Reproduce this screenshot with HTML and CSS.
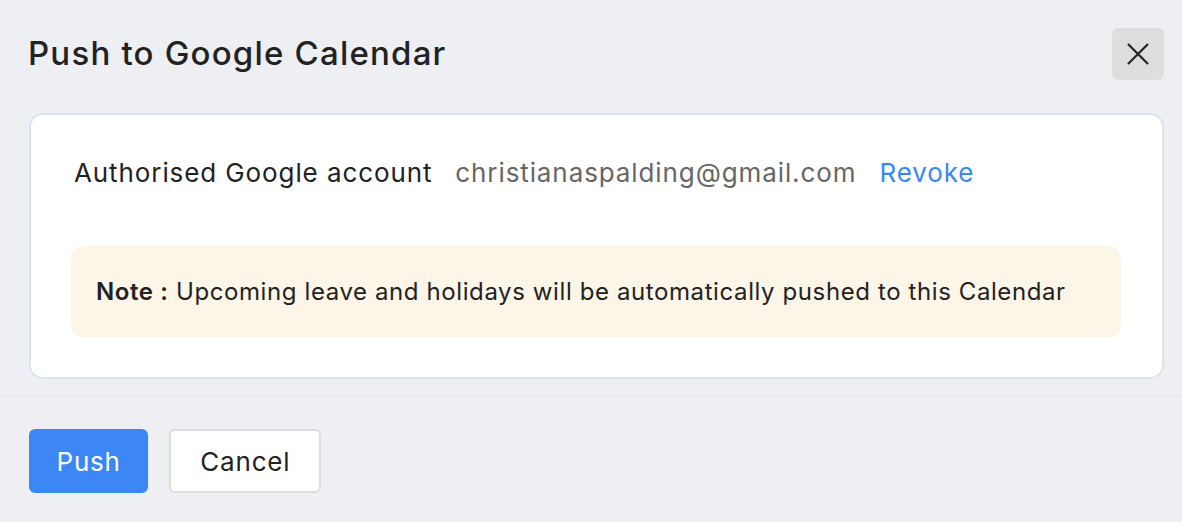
FILE: index.html
```html
<!doctype html>
<html>
  <head>
    <meta charset="UTF-8" />
    <link rel="stylesheet" href="styles.css">
  </head>
  <body>
    <div class="header">
      <h1 class="title">Push to Google Calendar</h1>
      <button class="close" aria-label="Close">
        <svg width="24" height="24" viewBox="0 0 24 24">
          <path d="M2 2 L22 22 M22 2 L2 22" stroke="#222" stroke-width="2.2" fill="none" />
        </svg>
      </button>
    </div>
    <div class="card">
      <div class="account-row">
        <span class="label">Authorised Google account</span>
        <span class="email">christianaspalding@gmail.com</span>
        <a class="revoke" href="#">Revoke</a>
      </div>
      <div class="note">
        <b>Note :</b> Upcoming leave and holidays will be automatically pushed to this Calendar
      </div>
    </div>
    <div class="footer">
      <button class="btn primary">Push</button>
      <button class="btn cancel">Cancel</button>
    </div>
  </body>
</html>
```

FILE: styles.css
```css
html,
body {
  margin: 0;
  height: 100%;
  background: #eeeff3;
  font-family: Inter, "Noto Sans", sans-serif;
  color: #222;
}
.header {
  display: flex;
  justify-content: space-between;
  align-items: flex-start;
  padding: 28px 18px 0 28px;
}
.title {
  margin: 0;
  padding-top: 3px;
  font-size: 33px;
  font-weight: 500;
  line-height: 44px;
  letter-spacing: 1.2px;
}
.close {
  width: 52px;
  height: 52px;
  border: none;
  border-radius: 6px;
  background: #dedede;
  display: flex;
  align-items: center;
  justify-content: center;
  padding: 0;
  cursor: pointer;
}
.card {
  margin: 33px 18px 0 29px;
  background: #fff;
  border: 2px solid #dce3ee;
  border-radius: 14px;
  padding: 40px 41px 40px 40px;
}
.account-row {
  display: flex;
  align-items: center;
  gap: 23px;
  padding-left: 3px;
  font-size: 26px;
  line-height: 36px;
  letter-spacing: 0.9px;
}
.email {
  color: #666;
}
.revoke {
  color: #3b87f0;
  text-decoration: none;
}
.note {
  margin-top: 55px;
  background: #fdf6e8;
  border-radius: 12px;
  padding: 28px 25px;
  font-size: 24px;
  line-height: 35px;
  letter-spacing: 0.6px;
}
.note b {
  font-weight: 600;
}
.footer {
  margin-top: 16px;
  border-top: 1px solid #e6e7ea;
  padding: 33px 29px 0;
  display: flex;
  gap: 21px;
}
.btn {
  height: 64px;
  padding: 0 25.5px;
  font-family: inherit;
  font-size: 26px;
  letter-spacing: 0.8px;
  color: #222;
  background: #fff;
  border: 2px solid #ddd;
  border-radius: 6px;
  cursor: pointer;
}
.btn.cancel {
  padding: 0 29px;
}
.btn.primary {
  background: #3c87f5;
  border-color: #3c87f5;
  color: #fff;
}
```
